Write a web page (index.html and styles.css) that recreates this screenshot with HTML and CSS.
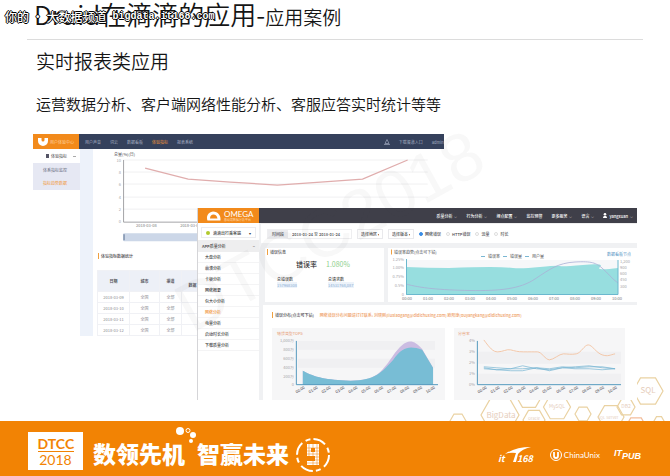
FILE: index.html
```html
<!DOCTYPE html>
<html lang="zh-CN">
<head>
<meta charset="utf-8">
<meta name="viewport" content="width=device-width, initial-scale=1">
<title>Druid在滴滴的应用</title>
<link rel="stylesheet" href="styles.css">
</head>
<body>
<div class="slide">
  <header class="slide-head">
    <h1>Druid在滴滴的应用-<small>应用案例</small></h1>
    <p class="channel"><b>你的 · 大数据频道</b><span>bigdata.it168.com</span></p>
  </header>
  <h2>实时报表类应用</h2>
  <p class="lead">运营数据分析、客户端网络性能分析、客服应答实时统计等等</p>

  <main class="stage">
    <section class="window voice">
      <header class="bar voice-bar">
        <div class="voice-logo">
          <svg viewBox="0 0 10 8" width="10" height="8"><path d="M0 0h3.500v2a1.500 1.500 0 0 0 3 0V0H10v3a5 5 0 0 1-10 0z" fill="#fff"/></svg>
          <span>用户体验中心</span>
        </div>
        <nav>
          <a href="#">用户声音</a><a href="#">词云</a><a href="#">数据看板</a><a href="#" class="on">体验指标</a><a href="#">报表系统</a>
        </nav>
        <div class="voice-user">
          <svg viewBox="0 0 6 6" width="6" height="6"><path d="M3 .5L1 4.500h4zM0 5.500h6" fill="none" stroke="#9ba5ba" stroke-width=".7"/></svg>
          <span>下载渠道入口</span><span>admin</span>
        </div>
      </header>
      <div class="voice-body">
        <aside class="voice-side">
          <p><i class="dot"></i>体验指标<i class="caret"></i></p>
          <ul><li><a href="#">体系指标监控</a></li><li><a href="#" class="on">指标趋势数据</a></li></ul>
        </aside>
        <div class="voice-main">
          <svg class="chart" viewBox="93 149 350 100">
            <text x="114" y="156" class="ink">总量(%)(日)</text>
            <path d="M123 160h304M123 172h304M123 184h304M123 197h304M123 209h304" stroke="#ececee" stroke-width=".8"/>
            <path d="M123.500 160v62H427" fill="none" stroke="#8e8e92" stroke-width=".8"/>
            <g class="faint end"><text x="121" y="162">10</text><text x="121" y="174">8</text><text x="121" y="186">6</text><text x="121" y="199">4</text><text x="121" y="211">2</text><text x="121" y="223">0</text></g>
            <path d="M145 168L188 179 230 182 277 185 320 182 362 179 407 160" fill="none" stroke="#e0adad" stroke-width="1.300"/>
            <text x="136" y="227" class="mid">2018-03-08</text><text x="180" y="227" class="mid">2018-03-09</text>
            <rect x="123" y="233" width="304" height="8" rx="1" fill="#ccd7e8"/><path d="M124 234v6" stroke="#8194ae" stroke-width="1.500"/>
          </svg>
          <h3>体验指标数据统计</h3>
          <table>
            <thead><tr><th>日期</th><th>城市</th><th>渠道</th><th>数据</th><th></th></tr></thead>
            <tbody>
              <tr><td>2018-03-09</td><td>全国</td><td>全部</td><td>22</td><td></td></tr>
              <tr><td>2018-03-10</td><td>全国</td><td>全部</td><td>207</td><td></td></tr>
              <tr><td>2018-03-11</td><td>全国</td><td>全部</td><td>207</td><td></td></tr>
              <tr><td>2018-03-12</td><td>全国</td><td>全部</td><td>254</td><td></td></tr>
            </tbody>
          </table>
        </div>
      </div>
    </section>

    <section class="window omega">
      <header class="bar omega-bar">
        <div class="omega-logo">
          <svg viewBox="0 0 15 10" width="15" height="10"><path d="M1.500 9.500C0 6 1.500 1 7 .5c5 0 8 4 7.500 9z" fill="#fff"/><path d="M4 7.500C4 5 5.500 3.500 7.500 3.500S11 5 11.500 7.500z" fill="#f28a1b"/></svg>
          <div><b>OMEGA</b><small>移动端数据分析平台</small></div>
        </div>
        <nav>
          <a href="#">质量分析<i>⌵</i></a><a href="#">行为分析<i>⌵</i></a><a href="#">埋点配置<i>⌵</i></a><a href="#">监控预警</a><a href="#">更多服务<i>⌵</i></a><a href="#">语言<i>⌵</i></a>
          <a href="#"><svg viewBox="0 0 4 5" width="4" height="5"><circle cx="2" cy="1.300" r="1.300" fill="#fff"/><path d="M0 5c0-3 4-3 4 0z" fill="#fff"/></svg>yangxuan <i>⌵</i></a>
        </nav>
      </header>
      <div class="omega-body">
        <aside class="omega-side">
          <label class="app"><i></i><select aria-label="应用"><option>滴滴出行乘客端</option></select></label>
          <p>APP质量分析<span>−</span></p>
          <ul>
            <li><a href="#">大盘分析</a></li><li><a href="#">崩溃分析</a></li><li><a href="#">卡顿分析</a></li><li><a href="#">网络概要</a></li><li><a href="#">包大小分析</a></li><li><a href="#" class="on">网络分析</a></li><li><a href="#">电量分析</a></li><li><a href="#">启动时长分析</a></li><li><a href="#">下载质量分析</a></li>
          </ul>
        </aside>
        <div class="omega-main">
          <form class="tools">
            <label class="date"><span>时间段</span><input type="text" value="2018-01-24 至 2018-01-24"></label>
            <select aria-label="地区"><option>选择地区 ▾</option></select>
            <select aria-label="版本"><option>选择版本 ▾</option></select>
            <div class="radios">
              <label><input type="radio" name="kind" checked>网络错误</label>
              <label><input type="radio" name="kind">HTTP错误</label>
              <label><input type="radio" name="kind">流量</label>
              <label><input type="radio" name="kind">时长</label>
            </div>
          </form>
          <div class="panels">
            <section class="panel stats">
              <h3>错误信息</h3>
              <p class="rate">错误率<b>1.080%</b></p>
              <dl><div><dt>总错误数</dt><dd>157968308</dd></div><div><dt>总请求数</dt><dd>14531768,087</dd></div></dl>
            </section>
            <section class="panel">
              <svg class="chart" viewBox="388 248 249 54">
                <path d="M391.500 249.500v5" stroke="#f0a040" stroke-width="1"/>
                <text x="394" y="254" class="ink">错误率趋势(点击可下钻)</text>
                <path d="M481 256.500h4M503 256.500h4M525 256.500h4" stroke="#7ab7d3"/>
                <text x="488" y="258" class="ink">错误率</text><text x="510" y="258" class="ink">错误量</text><text x="532" y="258" class="ink">用户量</text>
                <text x="607" y="256" class="blue">数据看板节点</text>
                <path d="M406 260h212v35H406z" fill="#f6f7f9"/>
                <path d="M406 267Q427 268 449 268 475 267 490 267T513 268 540 267 560 266 583 265 600 267 618 268V295H406z" fill="#97dedf"/>
                <path d="M406 284C420 288 440 290 470 290.500S520 289 535 279 558 263 575 262 596 263 602 268 612 279 618 283" fill="none" stroke="#a9b0d6" stroke-width=".8"/>
                <path d="M406.500 259v35.500H618V260" fill="none" stroke="#6bb8ce"/>
                <g class="faint end"><text x="404" y="261">1.25%</text><text x="404" y="269">1.00%</text><text x="404" y="278">0.75%</text><text x="404" y="287">0.5%</text><text x="404" y="296">0</text></g>
                <g class="faint"><text x="620" y="263">1,200</text><text x="620" y="269">900</text><text x="620" y="275">600</text><text x="620" y="281">450</text><text x="620" y="288">300</text></g>
                <g class="mid"><text x="402" y="300">00:00</text><text x="423" y="300">01:00</text><text x="444" y="300">02:00</text><text x="465" y="300">03:00</text><text x="486" y="300">04:00</text><text x="507" y="300">05:00</text><text x="528" y="300">06:00</text><text x="549" y="300">07:00</text><text x="570" y="300">08:00</text><text x="591" y="300">09:00</text><text x="612" y="300">10:00</text></g>
              </svg>
            </section>
          </div>
          <section class="panel spread">
            <h3>错误分布(点击可下钻)<em>网络错误分布问题请钉钉联系: 刘晓刚(liuxiaogang@didichuxing.com) 欧阳康(ouyangkang@didichuxing.com)</em></h3>
            <div class="graphs">
              <svg viewBox="271 328 174 72">
                <path d="M297 341h138v9H297zM297 359h138v9H297z" fill="#f0f0f2"/>
                <text x="276" y="335" class="red">错误类型TOP5</text>
                <path d="M302 371C315 378 325 380 350 381 375 381 380 374 392 357 405 338 412 338 422 349L433 368V385H302z" fill="#cbbce2"/>
                <path d="M302 371C315 378 325 380 350 381 375 381 382 372 393 360 403 346 410 346 422 350L433 368V385H302z" fill="#78bdd5"/>
                <path d="M295.500 341v44H438" fill="none" stroke="#5599bd"/>
                <g class="faint end"><text x="293" y="342">1,000万</text><text x="293" y="351">800万</text><text x="293" y="360">600万</text><text x="293" y="369">400万</text><text x="293" y="378">200万</text><text x="293" y="386">0</text></g>
                <g class="ink"><text transform="translate(296 394) rotate(-33)">00:00</text><text transform="translate(309 394) rotate(-33)">01:00</text><text transform="translate(322 394) rotate(-33)">02:00</text><text transform="translate(336 394) rotate(-33)">03:00</text><text transform="translate(349 394) rotate(-33)">04:00</text><text transform="translate(362 394) rotate(-33)">05:00</text><text transform="translate(375 394) rotate(-33)">06:00</text><text transform="translate(388 394) rotate(-33)">07:00</text><text transform="translate(401 394) rotate(-33)">08:00</text><text transform="translate(414 394) rotate(-33)">09:00</text><text transform="translate(427 394) rotate(-33)">10:00</text></g>
              </svg>
              <svg viewBox="454 328 172 72">
                <path d="M478 352h144v12H478zM478 374h144v10H478z" fill="#f0f0f2"/>
                <text x="458" y="335" class="red">分省率</text>
                <path d="M484 340C490 348 493 352 498 352S507 349 511 350 518 352 524 352 534 352 538 352 546 360 550 360 560 354 564 354 572 355 577 354 585 345 589 345 597 353 603 355 611 355 616 354" fill="none" stroke="#f3c3a1" stroke-width=".9"/>
                <path d="M484 367L497 368 511 369 523 369 537 368 550 369 563 367 576 368 590 367 603 367 616 369M484 369L497 370 511 371 523 371 537 368 550 371 563 368 576 369 590 369 603 370 616 369M484 368L497 370 511 369 523 366 537 369 550 370 563 368 576 367 590 366 603 368 616 369" fill="none" stroke="#75b4d2" stroke-width=".7" stroke-linejoin="round"/>
                <path d="M477.500 341v44H622" fill="none" stroke="#5599bd"/>
                <g class="faint end"><text x="475" y="342">4%</text><text x="475" y="353">3%</text><text x="475" y="364">2%</text><text x="475" y="375">1%</text><text x="475" y="386">0%</text></g>
                <g class="ink"><text transform="translate(479 394) rotate(-33)">00:00</text><text transform="translate(492 394) rotate(-33)">01:00</text><text transform="translate(505 394) rotate(-33)">02:00</text><text transform="translate(518 394) rotate(-33)">03:00</text><text transform="translate(531 394) rotate(-33)">04:00</text><text transform="translate(544 394) rotate(-33)">05:00</text><text transform="translate(558 394) rotate(-33)">06:00</text><text transform="translate(571 394) rotate(-33)">07:00</text><text transform="translate(584 394) rotate(-33)">08:00</text><text transform="translate(597 394) rotate(-33)">09:00</text><text transform="translate(610 394) rotate(-33)">10:00</text></g>
              </svg>
            </div>
          </section>
        </div>
      </div>
    </section>
    <div class="watermark">DTCC2018</div>
  </main>

  <footer class="foot">
    <svg class="hexes" viewBox="440 370 230 51" width="230" height="51">
      <defs><path id="hex" d="M-10 0L-5-8.700H5L10 0 5 8.700H-5z" vector-effect="non-scaling-stroke"/></defs>
      <g fill="none" stroke="#ead2a2" stroke-width="1.200">
        <use href="#hex" transform="translate(648 391) scale(1.500)"/>
        <use href="#hex" transform="translate(500 415) scale(1.900)"/>
        <use href="#hex" transform="translate(529 396) scale(1.300)"/>
        <use href="#hex" transform="translate(534 420) scale(1.100)"/>
        <use href="#hex" transform="translate(557 407) scale(1.350)"/>
        <use href="#hex" transform="translate(583 414) scale(.8)"/>
        <use href="#hex" transform="translate(611 417) scale(1.300)"/>
        <use href="#hex" transform="translate(626 407) scale(.9)"/>
        <use href="#hex" transform="translate(458 421) scale(.8)"/>
        <use href="#hex" transform="translate(636 427) scale(1.050)" stroke="#f3bd9b"/>
        <use href="#hex" transform="translate(659 421) scale(.5)"/>
      </g>
      <g fill="#e6cdbb" text-anchor="middle"><text x="648" y="393" class="t8">SQL</text><text x="501" y="418" class="t8">BigData</text><text x="557" y="408" class="t5">MySQL</text><text x="534" y="420">Oracle</text><text x="626" y="408" class="t5">DB2</text><text x="608" y="419">SQL Server</text></g>
    </svg>
    <div class="badge"><b>DTCC</b><span>2018</span></div>
    <p class="slogan"><span>数领先机</span><span>智赢未来</span>
      <svg viewBox="0 0 22 18" width="22" height="18"><g fill="#fff"><circle cx="5" cy="5" r="4"/><circle cx="18" cy="9" r="3"/><circle cx="16" cy="15" r="2"/></g><circle cx="13" cy="4.500" r="2" fill="none" stroke="#fff"/></svg>
    </p>
    <svg class="nine" viewBox="0 0 36 36" width="36" height="36"><g fill="none" stroke="#fff"><circle cx="18" cy="18" r="16" stroke-width="2" stroke-dasharray="13 4 5 3.130"/><path d="M22 17H14V9h8v17H12" stroke-width="4"/></g><path d="M10 11h14M10 14h14M10 17h14M20 20h5M20 23h5M10 26h14M14 6v14M22 6v22M18 6v22" stroke="#f28304" stroke-width=".5"/></svg>
    <div class="partners">
      <svg viewBox="0 0 38 18" width="38" height="18"><path d="M7 8Q17 1 33 1 24 3 20 8L18 16H15L18 7Q12 6 7 8z" fill="#fff"/><text x="0" y="16" font-weight="700" font-style="italic" fill="#fff">it</text><text x="19" y="16" font-weight="700" font-style="italic" fill="#fff">168</text></svg>
      <div class="unix"><svg viewBox="0 0 12 12" width="12" height="12"><circle cx="6" cy="6" r="5.500" fill="none" stroke="#fff"/><path d="M4 3v4a2 2 0 0 0 4 0V3" fill="none" stroke="#fff" stroke-width="1.800"/></svg><span>ChinaUnix</span></div>
      <div class="itpub"><b>IT</b><i>PUB</i></div>
    </div>
  </footer>
</div>
</body>
</html>
```
FILE: styles.css
```css
* { box-sizing: border-box; }
body, h1, h2, h3, p, ul, dl, dd { margin: 0; padding: 0; }
body {
  background: #fff;
  color: #151515;
  font-family: "Noto Sans CJK SC", "Liberation Sans", sans-serif;
  overflow: hidden;
}
ul { list-style: none; }
a { color: inherit; text-decoration: none; }
i { font-style: normal; }
svg { display: block; }

.slide { min-height: 100vh; display: flex; flex-direction: column; }
.slide-head {
  position: relative;
  height: 40px;
  margin: 0 27px;
  padding-left: 7px;
  border-bottom: 1px solid #dcdcdc;
}
h1 { font-size: 26px; line-height: 28px; font-weight: 350; white-space: nowrap; }
h1 small { font-size: 19px; }
.channel {
  position: absolute;
  left: -22px;
  top: 9px;
  display: flex;
  gap: 6px;
  font: 700 10px/15px "Liberation Mono", "Noto Sans CJK SC", monospace;
  color: #fff;
  white-space: nowrap;
  text-shadow: 1px 0 #000, -1px 0 #000, 0 1px #000, 0 -1px #000;
}
.channel b { font: 500 12px/15px "Noto Sans CJK SC", sans-serif; }
h2 { margin: 8px 36px 0; font-size: 19px; line-height: 26px; font-weight: 350; }
.lead { margin: 19px 36px 0; font-size: 15px; line-height: 22px; font-weight: 350; }

.stage { position: relative; margin: 19px 33px 0; font-size: 4px; line-height: 6px; }
.bar { display: flex; height: 15px; align-items: center; color: #dfe2e8; }
.bar nav { display: flex; }
.voice { position: absolute; left: 0; top: 0; width: 68%; background: #fff; }
.voice-bar { background: #35415c; color: #a6afc2; }
.voice-logo, .omega-logo { display: flex; align-items: center; height: 15px; background: #f28a1b; color: #fff; }
.voice-logo { width: 46px; padding-left: 5px; gap: 2px; color: #ffd3a0; }
.voice-bar nav { gap: 9px; padding-left: 6px; }
.on { color: #f1963b; }
.voice-user { margin-left: auto; display: flex; gap: 9px; }
.voice-body { display: flex; }
.voice-side { width: 47px; }
.voice-side p { display: flex; align-items: center; gap: 2px; height: 14px; padding-left: 13px; color: #444; }
.dot { width: 3px; height: 4px; background: #556; }
.caret { width: 3px; height: 1px; margin-left: 4px; background: #aaa; }
.voice-side ul { padding: 1px 0 0 10px; background: #e6e8f3; color: #666c80; }
.voice-side li { height: 13px; padding-top: 3px; }
.voice-main { flex: 1; border-left: 13px solid #edf2fa; }
.chart { width: 100%; height: auto; }
svg text { font-size: 4px; }
svg .t8 { font-size: 8px; }
svg .t5 { font-size: 5px; }
.partners svg text { font-size: 9px; }
.ink { fill: #4a4a4e; }
.mid { fill: #7b7b80; }
.faint { fill: #a6a6aa; }
.end text { text-anchor: end; }
.blue { fill: #4f91c3; }
.red { fill: #e69771; }
h3 { font-size: 4px; line-height: 6px; font-weight: 500; color: #4a4a4e; border-left: 1px solid #f0a040; padding-left: 2px; }
.voice-main h3 { margin: 4px 0 0 5px; }
table { width: 345px; margin: 11px 0 0 4px; border-collapse: collapse; table-layout: fixed; text-align: center; color: #8c8c92; }
th, td { height: 11px; padding: 0; border: 1px solid #f0f1f5; }
th { height: 21px; background: #edf0f7; color: #55555c; }
th:nth-child(1) { width: 32px; }
th:nth-child(2) { width: 30px; }
th:nth-child(3) { width: 22px; }
th:nth-child(4) { width: 40px; }
th:nth-child(4) { padding: 8px 18px 0 0; }

.omega { position: relative; margin: 74px 0 0 164px; background: #fff; border-left: 1px solid #d5d5d8; }
.omega-bar { background: #3f3f49; }
.omega-logo { width: 61px; padding-left: 8px; gap: 3px; }
.omega-logo b { display: block; font: 8px/8px Lato, sans-serif; }
.omega-logo small { display: block; font-size: 3px; line-height: 4px; color: #ffd7ad; }
.omega-bar nav { margin-left: auto; gap: 9px; padding-right: 4px; color: #fff; font-weight: 500; }
.omega-bar nav a { display: flex; gap: 2px; }
.omega-body { display: flex; }
.omega-side { width: 61px; color: #3c3c40; font-weight: 500; }
select, input { font: inherit; color: inherit; }
select { appearance: none; border: 1px solid #e9e9ec; background: #fff; padding: 0 3px; margin: 0; }
.app { display: flex; align-items: center; margin: 4px 3px 2px; height: 11px; padding: 0 4px; border: 1px solid #ececef; }
.app::after { content: "▾"; }
.app i { width: 4px; height: 4px; border-radius: 50%; background: #b1c92c; }
.app select { flex: 1; border: 0; min-width: 0; height: 9px; }
.omega-side p { display: flex; justify-content: space-between; height: 12px; padding: 3px 4px; background: #eeeeef; }
.omega-side li { height: 11px; padding: 2px 0 0 7px; border-bottom: 1px solid #f4f4f5; }
.omega-main { flex: 1; min-width: 0; background: #f0f1f3; padding-left: 2px; }
.tools { display: flex; align-items: center; gap: 5px; height: 20px; padding-left: 6px; background: #fff; color: #4a4a4e; border-top: 1px solid #eee; font-weight: 500; }
.tools > select { height: 10px; width: 26px; }
.date { display: flex; height: 10px; border: 1px solid #eeeef0; }
.date span { width: 20px; padding: 1px 0 0 4px; background: #ececef; }
.date input { width: 63px; border: 0; padding: 0 4px; }
.radios { display: flex; gap: 5px; }
.radios label { display: flex; align-items: center; gap: 2px; }
.radios input { appearance: none; width: 4px; height: 4px; margin: 0; border: 1px solid #ddd; border-radius: 50%; }
.radios input:checked { border-color: #3b8de6; background: #3b8de6; }
.panels { display: grid; grid-template-columns: 119fr 249fr; gap: 4px; margin: 5px 0 3px 4px; }
.panel { background: #fff; }
.stats h3 { margin: 1px 2px 0; }
.rate { display: flex; gap: 9px; margin: 4px 0 7px 31px; font-size: 7px; line-height: 10px; }
.rate b { color: #8ecf8d; font-weight: 400; }
dl { display: flex; gap: 31px; padding-left: 12px; }
dd { color: #8aaed5; background: #edf3fa; }
.spread { margin-left: 2px; padding: 7px 12px 0 9px; }
.spread h3 { white-space: nowrap; }
.spread em { margin-left: 6px; color: #ee9c63; font-style: normal; }
.graphs { display: grid; grid-template-columns: 174fr 172fr; gap: 9px; margin-top: 10px; }
.graphs svg { width: 100%; height: auto; background: #f6f6f7; }
.watermark {
  position: absolute;
  left: 126px;
  top: 58px;
  font: 68px/76px "Liberation Sans", sans-serif;
  color: rgba(70, 70, 80, .04);
  transform: rotate(-29deg);
  pointer-events: none;
}

.foot { position: relative; margin-top: auto; display: flex; align-items: center; height: 55px; padding: 0 29px 0 28px; background: #f28304; color: #fff; }
.hexes { position: absolute; right: 0; bottom: 100%; z-index: -1; }
.badge { display: flex; flex-direction: column; width: 55px; height: 38px; padding-top: 4px; background: #fff; color: #f28304; text-align: center; font-family: Lato, sans-serif; margin-top: 4px; }
.badge b, .badge span { width: 36px; margin: 0 auto; font-size: 14px; line-height: 15px; }
.badge b { border-bottom: 1px solid #f28304; }
.slogan { position: relative; display: flex; gap: 12px; margin: 8px 0 0 10px; font-size: 23px; line-height: 30px; font-weight: 900; white-space: nowrap; }
.slogan svg { position: absolute; left: 82px; top: -12px; }
.nine { margin: 12px 0 0 6px; }
.partners { margin: 12px 0 0 auto; display: flex; align-items: center; gap: 14px; }
.unix { display: flex; align-items: center; gap: 2px; font: 8px/12px Lato, sans-serif; }
.itpub { display: flex; font: italic 700 9px/10px "Liberation Sans", sans-serif; }
.itpub i { padding-top: 3px; font-style: italic; }
```
